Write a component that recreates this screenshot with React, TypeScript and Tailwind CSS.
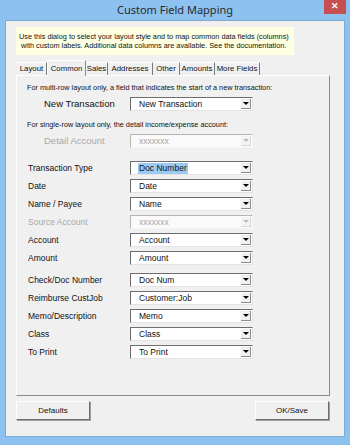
import React from 'react'

const sans = { fontFamily: '"Liberation Sans", Arial, sans-serif' }

function Combo({ value, disabled, selected }: { value: string; disabled?: boolean; selected?: boolean }) {
  return (
    <div
      className={
        'flex h-[14px] w-[123px] items-stretch border-t border-l border-b border-r ' +
        (disabled
          ? 'border-t-[#b5b5b5] border-l-[#b5b5b5] border-b-[#f4f4f4] border-r-[#f4f4f4] bg-[#fafafa]'
          : 'border-t-[#6d6d6d] border-l-[#6d6d6d] border-b-[#e3e3e3] border-r-[#e3e3e3] bg-white')
      }
    >
      <div className="flex flex-1 items-center pl-[7px]">
        <span
          className={
            'whitespace-nowrap px-px text-[8.5px] leading-[11px] ' +
            (disabled ? 'text-[#a8a8a8]' : 'text-[#111]') +
            (selected ? ' bg-[#9dcaf2] text-[#0b2a4a]' : '')
          }
        >
          {value}
        </span>
      </div>
      <div
        className={
          'm-px flex w-[10px] items-center justify-center border-r border-b ' +
          (disabled ? 'border-[#d8d8d8] bg-[#f4f4f4]' : 'border-[#8c8c8c] bg-[#f0f0f0]')
        }
      >
        <div
          className={
            'h-0 w-0 border-l-[3px] border-r-[3px] border-t-[3px] border-l-transparent border-r-transparent ' +
            (disabled ? 'border-t-[#b8b8b8]' : 'border-t-black')
          }
        />
      </div>
    </div>
  )
}

function Row({ label, value, disabled, selected }: { label: string; value: string; disabled?: boolean; selected?: boolean }) {
  return (
    <div className="flex h-[14px] items-center">
      <span
        className={
          'w-[103px] whitespace-nowrap pl-[1px] text-[8.5px] ' + (disabled ? 'text-[#a8a8a8]' : 'text-[#111]')
        }
      >
        {label}
      </span>
      <Combo value={value} disabled={disabled} selected={selected} />
    </div>
  )
}

const tabs = [
  { name: 'Layout', w: 30 },
  { name: 'Common', w: 39, active: true },
  { name: 'Sales', w: 22 },
  { name: 'Addresses', w: 45 },
  { name: 'Other', w: 27 },
  { name: 'Amounts', w: 35 },
  { name: 'More Fields', w: 45 },
]

export default function App() {
  return (
    <div className="flex h-[445px] w-[350px] flex-col bg-[#8dc1ef]" style={sans}>
      {/* title bar */}
      <div className="relative flex h-[20px] items-center justify-center">
        <span className="text-[11px] text-[#2b2b2b]" style={{ fontFamily: '"Noto Sans", "Open Sans", sans-serif' }}>
          Custom Field Mapping
        </span>
        <div className="absolute right-[4px] top-0 flex h-[14px] w-[22px] items-center justify-center bg-[#c74f4f] text-[9px] font-bold text-white">
          ✕
        </div>
      </div>

      {/* client */}
      <div className="mx-[5px] mb-[8px] flex flex-1 flex-col border border-[#7ea9d0] bg-[#f0f0f0] pl-[10px] pr-[14px]">
        <div className="mt-[6px] flex h-[28px] w-[278px] flex-col justify-center whitespace-nowrap bg-[#ffffe1] pl-[3px] text-[7.3px] leading-[9.5px] text-[#111]">
          <span>Use this dialog to select your layout style and to map common data fields (columns)</span>
          <span className="pl-[2px]">with custom labels. Additional data columns are available. See the documentation.</span>
        </div>

        {/* tabs */}
        <div className="mt-[6px] flex h-[14px] items-end pl-px">
          {tabs.map((t) =>
            t.active ? (
              <div
                key={t.name}
                className="relative z-10 -mb-px flex h-[16px] items-center justify-center whitespace-nowrap border-t border-l border-r border-t-white border-l-white border-r-[#8a8a8a] bg-[#f0f0f0] text-[7.8px] text-[#111]"
                style={{ width: t.w }}
              >
                {t.name}
              </div>
            ) : (
              <div
                key={t.name}
                className="flex h-[13px] items-center justify-center whitespace-nowrap border-r border-t border-t-white border-r-[#7a7a7a] text-[7.8px] text-[#111]"
                style={{ width: t.w }}
              >
                {t.name}
              </div>
            )
          )}
        </div>

        {/* panel */}
        <div className="flex h-[321px] w-[314px] flex-col border border-t-white border-l-white border-r-[#8a8a8a] border-b-[#8a8a8a] pl-[10px]">
          <div className="mt-[7px] h-[10px] whitespace-nowrap text-[7.3px] leading-[10px] text-[#111]">
            For multi-row layout only, a field that indicates the start of a new transaction:
          </div>
          <div className="mt-[4px] flex h-[14px] items-center">
            <span className="w-[103px] whitespace-nowrap pl-[17px] text-[9.5px] text-[#111]">New Transaction</span>
            <Combo value="New Transaction" />
          </div>
          <div className="mt-[9px] h-[10px] whitespace-nowrap text-[7.3px] leading-[10px] text-[#111]">
            For single-row layout only, the detail income/expense account:
          </div>
          <div className="mt-[4px] flex h-[14px] items-center">
            <span className="w-[103px] whitespace-nowrap pl-[17px] text-[9.5px] text-[#a8a8a8]">Detail Account</span>
            <Combo value="xxxxxxx" disabled />
          </div>

          <div className="mt-[13px] flex flex-col gap-[4px]">
            <Row label="Transaction Type" value="Doc Number" selected />
            <Row label="Date" value="Date" />
            <Row label="Name / Payee" value="Name" />
            <Row label="Source Account" value="xxxxxxx" disabled />
            <Row label="Account" value="Account" />
            <Row label="Amount" value="Amount" />
          </div>
          <div className="mt-[8px] flex flex-col gap-[4px]">
            <Row label="Check/Doc Number" value="Doc Num" />
            <Row label="Reimburse CustJob" value="Customer:Job" />
            <Row label="Memo/Description" value="Memo" />
            <Row label="Class" value="Class" />
            <Row label="To Print" value="To Print" />
          </div>
        </div>

        {/* buttons */}
        <div className="mt-[5px] flex w-[313px] justify-between">
          <button className="flex h-[19px] w-[74px] items-center justify-center border border-t-white border-l-white border-r-[#6d6d6d] border-b-[#6d6d6d] bg-[#f0f0f0] text-[8px] text-[#111] shadow-[1px_1px_0_#a0a0a0]">
            Defaults
          </button>
          <button className="flex h-[19px] w-[74px] items-center justify-center border border-t-white border-l-white border-r-[#6d6d6d] border-b-[#6d6d6d] bg-[#f0f0f0] text-[8px] text-[#111] shadow-[1px_1px_0_#a0a0a0]">
            OK/Save
          </button>
        </div>
      </div>
    </div>
  )
}
